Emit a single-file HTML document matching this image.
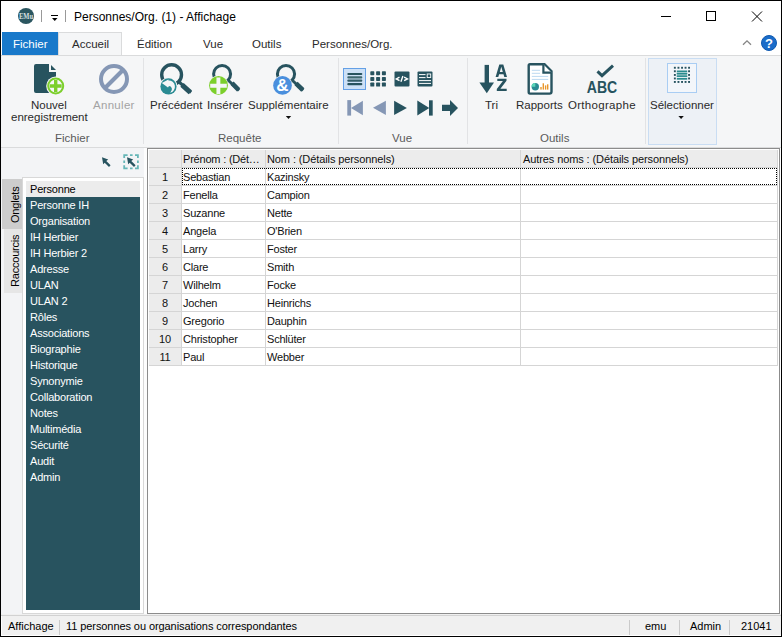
<!DOCTYPE html>
<html><head><meta charset="utf-8">
<style>
*{margin:0;padding:0;box-sizing:border-box}
html,body{width:782px;height:637px;overflow:hidden;background:#fff}
body{position:relative;font-family:"Liberation Sans",sans-serif;color:#222}
.a{position:absolute}
.t{position:absolute;white-space:nowrap;line-height:1}
#frame{left:0;top:0;width:782px;height:637px;border:1px solid #000}
.rb{font-size:11.5px;color:#2a2a2a}
.grp{font-size:11.5px;color:#5a5a5a}
.sep{position:absolute;width:1px;background:#e2e3e5}
.lst{font-size:11px;color:#fff;letter-spacing:-0.2px}
.g{font-size:11px;color:#111;letter-spacing:-0.2px}
.hl{position:absolute;height:1px;background:#d5d5d5}
.vl{position:absolute;width:1px;background:#d5d5d5}
.sb{font-size:11px;color:#000}
</style></head><body>
<!-- title bar -->
<div class="a" style="left:18px;top:8px;width:16px;height:16px;border-radius:50%;background:#2b5660"></div>
<svg class="a" style="left:0;top:0" width="40" height="30"><text x="19" y="18.8" font-family="Liberation Serif" font-weight="bold" font-size="8.5" textLength="14" lengthAdjust="spacingAndGlyphs" fill="#d9e1e2">EMu</text></svg>
<div class="a" style="left:41px;top:10px;width:1px;height:12px;background:#999"></div>
<div class="a" style="left:51px;top:15px;width:7px;height:1px;background:#000"></div>
<svg class="a" style="left:51px;top:17px" width="8" height="5"><path d="M1 1H6.5L3.75 4Z" fill="#000"/></svg>
<div class="a" style="left:65px;top:10px;width:1px;height:12px;background:#999"></div>
<div class="t" style="left:74px;top:11px;font-size:12px;color:#000">Personnes/Org. (1) - Affichage</div>
<div class="a" style="left:661px;top:16px;width:10px;height:1px;background:#000"></div>
<div class="a" style="left:706px;top:11px;width:10px;height:10px;border:1px solid #000"></div>
<svg class="a" style="left:751px;top:11px" width="12" height="12"><path d="M1 0.5L11 10.5M11 0.5L1 10.5" stroke="#000" stroke-width="1"/></svg>

<!-- tabs -->
<div class="a" style="left:2px;top:32px;width:56px;height:23px;background:#1979ca"></div>
<div class="t" style="left:13px;top:39px;font-size:11.5px;color:#fff">Fichier</div>
<div class="a" style="left:58px;top:32px;width:64px;height:24px;background:#f5f6f7;border:1px solid #dadbdc;border-bottom:none"></div>
<div class="t rb" style="left:72px;top:39px">Accueil</div>
<div class="t rb" style="left:137px;top:39px">Édition</div>
<div class="t rb" style="left:203px;top:39px">Vue</div>
<div class="t rb" style="left:252px;top:39px">Outils</div>
<div class="t rb" style="left:312px;top:39px">Personnes/Org.</div>
<svg class="a" style="left:740px;top:38px" width="14" height="10"><path d="M3 6.8L7 2.9L11 6.8" stroke="#858585" fill="none" stroke-width="1.3"/></svg>
<div class="a" style="left:761px;top:35px;width:16px;height:16px;border-radius:50%;background:#1a6cc9;border:1px solid #0e59b0"></div>
<div class="t" style="left:765px;top:37px;font-size:13px;font-weight:bold;color:#fff">?</div>

<!-- ribbon -->
<div class="a" style="left:1px;top:55px;width:780px;height:93px;background:#f5f6f7;border-top:1px solid #dadbdc;border-bottom:1px solid #dadbdc"></div>
<div class="sep" style="left:143px;top:58px;height:86px"></div>
<div class="sep" style="left:338px;top:58px;height:86px"></div>
<div class="sep" style="left:467px;top:58px;height:86px"></div>
<div class="sep" style="left:645px;top:58px;height:86px"></div>

<div class="a" style="left:648px;top:58px;width:69px;height:87px;background:#edf1f6;border:1px solid #c9ddf3"></div>
<div class="a" style="left:667px;top:63px;width:30px;height:30px;background:#f3f6fa;border:1px solid #a9cdf3"></div>
<div class="a" style="left:343px;top:68px;width:23px;height:22px;background:#cce0f6;border:1px solid #64a0e6"></div>

<div class="t rb" style="left:31px;top:100px">Nouvel</div>
<div class="t rb" style="left:11px;top:112px">enregistrement</div>
<div class="t rb" style="left:93px;top:100px;color:#a3a3a3;letter-spacing:0.3px">Annuler</div>
<div class="t grp" style="left:55px;top:133px">Fichier</div>

<div class="t rb" style="left:150px;top:100px">Précédent</div>
<div class="t rb" style="left:207px;top:100px">Insérer</div>
<div class="t rb" style="left:248px;top:100px">Supplémentaire</div>
<div class="t grp" style="left:218px;top:133px">Requête</div>

<div class="t grp" style="left:392px;top:133px">Vue</div>

<div class="t rb" style="left:485px;top:100px">Tri</div>
<div class="t rb" style="left:516px;top:100px">Rapports</div>
<div class="t rb" style="left:568px;top:100px;letter-spacing:0.3px">Orthographe</div>
<div class="t grp" style="left:540px;top:133px">Outils</div>

<div class="t rb" style="left:650px;top:100px">Sélectionner</div>

<!-- ribbon icons -->
<svg class="a" style="left:0;top:0" width="782" height="150" viewBox="0 0 782 150">
 <!-- Nouvel: document -->
 <path d="M36 64H49V72H56V91Q56 93 54 93H36Q34 93 34 91V66Q34 64 36 64Z" fill="#27535f"/>
 <path d="M51 65L56 70H51Z" fill="#27535f"/>
 <circle cx="55.7" cy="86" r="9.5" fill="#f5f6f7"/>
 <circle cx="55.7" cy="86" r="7.5" fill="none" stroke="#7ccf2c" stroke-width="2"/>
 <path d="M49.7 86H61.7M55.7 80V92" stroke="#7ccf2c" stroke-width="3.4"/>
 <!-- Annuler -->
 <circle cx="114" cy="79" r="13" fill="none" stroke="#8597b5" stroke-width="4"/>
 <path d="M123.5 69.5L104.5 88.5" stroke="#8597b5" stroke-width="4"/>
 <!-- Precedent magnifier -->
 <circle cx="171.6" cy="74.7" r="9.9" fill="none" stroke="#27535f" stroke-width="3.4"/>
 <path d="M178.5 81.5L191 92.5" stroke="#27535f" stroke-width="3"/>
 <path d="M182 84.8L190.3 92.3" stroke="#27535f" stroke-width="5"/>
 <circle cx="168.5" cy="86.4" r="8.9" fill="#f5f6f7"/>
 <circle cx="168.5" cy="86.4" r="8.1" fill="#2a8b93"/>
 <path d="M161.8 83.1L168.4 79.5V80.4A6.3 6.3 0 0 1 170.2 92.8Q172.6 90.2 171.8 88.2Q171 86.1 169 86L168 87.6Z" fill="#f5f6f7"/>
 <!-- Inserer magnifier -->
 <circle cx="222.1" cy="74" r="8.5" fill="none" stroke="#27535f" stroke-width="3"/>
 <path d="M228 80L239 90.5" stroke="#27535f" stroke-width="3"/>
 <path d="M232 83.2L238.6 89.8" stroke="#27535f" stroke-width="4.6"/>
 <circle cx="218.5" cy="85.4" r="10" fill="#f5f6f7"/>
 <circle cx="218.5" cy="85.4" r="9.4" fill="#7ccf2c"/>
 <path d="M210.2 85.7H226.8M218.4 77.6V93.9" stroke="#f5f6f7" stroke-width="3.9"/>
 <!-- Supplementaire magnifier -->
 <circle cx="286" cy="74.1" r="8.6" fill="none" stroke="#27535f" stroke-width="3"/>
 <path d="M292 80L303 90.5" stroke="#27535f" stroke-width="3"/>
 <path d="M296 83.3L302.8 90" stroke="#27535f" stroke-width="4.6"/>
 <circle cx="282.5" cy="85.4" r="10" fill="#f5f6f7"/>
 <circle cx="282.5" cy="85.4" r="9.35" fill="#4a8fdd"/>
 <text x="282.3" y="90.6" text-anchor="middle" font-family="Liberation Sans" font-weight="bold" font-size="17" fill="#fff">&amp;</text>
 <!-- dropdown arrow under Supplementaire -->
 <path d="M285.8 115.9H291.2L288.5 118.9Z" fill="#111"/>
 <!-- Vue icons -->
 <g fill="#27535f">
  <rect x="347.3" y="72.9" width="15" height="2.2" rx="1"/>
  <rect x="347.3" y="76.2" width="15" height="2.2" rx="1" fill="#3f6871"/>
  <rect x="347.3" y="79.6" width="15" height="2.2" rx="1" fill="#345e68"/>
  <rect x="347.3" y="83" width="15" height="2.2" rx="1"/>
  <rect x="370.3" y="71.3" width="4" height="4" rx="0.7"/>
  <rect x="376.1" y="71.3" width="4" height="4" rx="0.7"/>
  <rect x="381.9" y="71.3" width="4" height="4" rx="0.7"/>
  <rect x="370.3" y="77" width="4" height="4" rx="0.7"/>
  <rect x="376.1" y="77" width="4" height="4" rx="0.7"/>
  <rect x="381.9" y="77" width="4" height="4" rx="0.7"/>
  <rect x="370.3" y="82.6" width="4" height="4" rx="0.7"/>
  <rect x="376.1" y="82.6" width="4" height="4" rx="0.7"/>
  <rect x="381.9" y="82.6" width="4" height="4" rx="0.7"/>
  <rect x="394.5" y="71.4" width="15" height="15" rx="1"/>
  <rect x="417.5" y="71.4" width="15" height="15" rx="1"/>
  <path d="M394 108L362.9 101" fill="none"/>
  <!-- nav -->
  <path d="M394.1 100.7L406.9 107.9L394.1 115.1Z"/>
  <path d="M417.3 100.5L429.3 107.9L417.3 115.5Z"/>
  <rect x="429" y="100.3" width="3.7" height="15.3"/>
  <path d="M442 104.7H450V100.1L458 108L450 115.9V110.9H442Z"/>
 </g>
 <g fill="#8597b5">
  <rect x="347.3" y="100.1" width="3.8" height="15.5"/>
  <path d="M351 107.9L362.9 100.7V115.2Z"/>
  <path d="M373 107.8L385.9 100.7V115.1Z"/>
 </g>
 <path d="M399.5 77.1L396.3 78.9L399.5 80.7M402.9 76.1L400.9 81.7M404.1 77.1L407.5 78.9L404.1 80.7" fill="none" stroke="#fff" stroke-width="1.4"/>
 <g stroke="#fff" stroke-width="1">
  <path d="M419 74.6H425.5M419 77.6H425.5M419 80.6H431M419 83.4H431"/>
  <rect x="427.2" y="74" width="3.5" height="3.5" fill="none" stroke-width="0.9"/>
 </g>
 <!-- Tri -->
 <g fill="#27535f">
  <rect x="484.6" y="64.9" width="4.4" height="18.5"/>
  <path d="M479.4 82.6H494L486.8 93.2Z"/>
  <path d="M499.3 64.4H503.3L507 76.9H504.3L503.5 74.2H499.1L498.3 76.9H495.6ZM499.8 71.9H502.8L501.3 66.8Z"/>
  <path d="M497.3 78.8H506.5V80.8L500.4 88.8H506.7V90.9H496.8V88.9L502.9 80.9H497.3Z"/>
 </g>
 <!-- Rapports -->
 <path d="M530 64.3H544.5L551.5 71.3V91.5Q551.5 93.6 549.5 93.6H530Q528.7 93.6 528.7 92V65.6Q528.7 64.3 530 64.3Z" fill="#fff" stroke="#27535f" stroke-width="2.4"/>
 <path d="M543.4 64.5V72.6H551.5" fill="#fff" stroke="#27535f" stroke-width="2.2"/>
 <g stroke="#bcd9f1" stroke-width="1">
  <path d="M531.8 70.3H540M531.8 73.3H540M531.8 76.4H548.2M531.8 79.4H548.2"/>
 </g>
 <circle cx="535.3" cy="86.8" r="3.7" fill="#2a8b93"/>
 <path d="M535.3 86.8V83.1A3.7 3.7 0 0 0 531.6 86.8Z" fill="#5ad6b8"/>
 <g fill="#e8962b">
  <rect x="540.3" y="87" width="1.4" height="2.6"/>
  <rect x="542.6" y="83.3" width="1.4" height="6.3"/>
  <rect x="544.9" y="85.4" width="1.4" height="4.2"/>
  <rect x="547" y="84.3" width="1.4" height="5.3"/>
 </g>
 <!-- Orthographe -->
 <path d="M597.5 71.4L602 75.6L613 65.7" fill="none" stroke="#27535f" stroke-width="3"/>
 <text x="602" y="92.9" text-anchor="middle" font-family="Liberation Sans" font-weight="bold" font-size="15.8" textLength="30.5" lengthAdjust="spacingAndGlyphs" fill="#27535f">ABC</text>
 <!-- Selectionner -->
 <g fill="#27535f"><rect x="673.9" y="66.8" width="1.9" height="1.9"/><rect x="677.5" y="66.8" width="1.9" height="1.9"/><rect x="681.1" y="66.8" width="1.9" height="1.9"/><rect x="684.6" y="66.8" width="1.9" height="1.9"/><rect x="688.1" y="66.8" width="1.9" height="1.9"/><rect x="673.9" y="70.3" width="1.9" height="1.9"/><rect x="688.1" y="70.3" width="1.9" height="1.9"/><rect x="673.9" y="74.0" width="1.9" height="1.9"/><rect x="688.1" y="74.0" width="1.9" height="1.9"/><rect x="673.9" y="77.5" width="1.9" height="1.9"/><rect x="688.1" y="77.5" width="1.9" height="1.9"/><rect x="673.9" y="81.0" width="1.9" height="1.9"/><rect x="677.5" y="81.0" width="1.9" height="1.9"/><rect x="681.1" y="81.0" width="1.9" height="1.9"/><rect x="684.6" y="81.0" width="1.9" height="1.9"/><rect x="688.1" y="81.0" width="1.9" height="1.9"/></g>
 <rect x="676.8" y="70.5" width="10.4" height="1.8" fill="#2a8b8f"/>
 <rect x="676.8" y="72.9" width="10.4" height="4" fill="#7fb8b9"/>
 <rect x="676.8" y="72.9" width="10.4" height="1.2" fill="#2a8b8f"/>
 <rect x="676.8" y="75.7" width="10.4" height="1.2" fill="#2a8b8f"/>
 <rect x="676.8" y="77.9" width="10.4" height="1.8" fill="#2a8b8f"/>
 <path d="M678.4 115.9H683.8L681.1 118.9Z" fill="#111"/>
</svg>

<!-- left panel -->
<div class="a" style="left:1px;top:148px;width:143px;height:466px;background:#f3f4f6"></div>
<div class="a" style="left:144px;top:148px;width:3px;height:466px;background:#fdfdfd"></div>
<svg class="a" style="left:0;top:148px" width="146" height="30" viewBox="0 148 146 30">
 <path d="M102 157.2L108.2 159.4L106.3 161.1L110.6 165.3L109 166.9L104.7 162.7L103.2 164.3Z" fill="#27535f"/>
 <path d="M124.2 158V155.1H127.6M135 155.1H137.9V158M137.9 165.3V168.4H135M127.6 168.4H124.2V165.3M130 155.1H132.6M130 168.4H132.6M124.2 160.5V163M137.9 160.5V163" fill="none" stroke="#66b6b7" stroke-width="1.8"/>
 <path d="M127 157.2L133.2 159.4L131.3 161.1L135.6 165.3L134 166.9L129.7 162.7L128.2 164.3Z" fill="#27535f"/>
</svg>
<div class="a" style="left:2px;top:179px;width:20px;height:50px;background:#cdcdcd"></div>
<div class="a" style="left:4px;top:229px;width:18px;height:64px;background:#e6e6e6"></div>
<div class="t" style="left:10px;top:223px;font-size:11px;color:#000;letter-spacing:-0.2px;transform:rotate(-90deg);transform-origin:0 0">Onglets</div>
<div class="t" style="left:10px;top:287px;font-size:11px;color:#000;letter-spacing:-0.2px;transform:rotate(-90deg);transform-origin:0 0">Raccourcis</div>
<div class="a" style="left:22px;top:177px;width:122px;height:437px;background:#fff;border:1px solid #d8d8d8"></div>
<div class="a" style="left:26px;top:181px;width:114px;height:16px;background:#ececec"></div>
<div class="a" style="left:26px;top:197px;width:114px;height:413px;background:#28535f"></div>
<div class="t" style="left:30px;top:184px;font-size:11px;color:#000;letter-spacing:-0.2px">Personne</div>
<div class="t lst" style="left:30px;top:200px">Personne IH</div>
<div class="t lst" style="left:30px;top:216px">Organisation</div>
<div class="t lst" style="left:30px;top:232px">IH Herbier</div>
<div class="t lst" style="left:30px;top:248px">IH Herbier 2</div>
<div class="t lst" style="left:30px;top:264px">Adresse</div>
<div class="t lst" style="left:30px;top:280px">ULAN</div>
<div class="t lst" style="left:30px;top:296px">ULAN 2</div>
<div class="t lst" style="left:30px;top:312px">Rôles</div>
<div class="t lst" style="left:30px;top:328px">Associations</div>
<div class="t lst" style="left:30px;top:344px">Biographie</div>
<div class="t lst" style="left:30px;top:360px">Historique</div>
<div class="t lst" style="left:30px;top:376px">Synonymie</div>
<div class="t lst" style="left:30px;top:392px">Collaboration</div>
<div class="t lst" style="left:30px;top:408px">Notes</div>
<div class="t lst" style="left:30px;top:424px">Multimédia</div>
<div class="t lst" style="left:30px;top:440px">Sécurité</div>
<div class="t lst" style="left:30px;top:456px">Audit</div>
<div class="t lst" style="left:30px;top:472px">Admin</div>

<!-- grid -->
<div class="a" style="left:147px;top:148px;width:633px;height:466px;background:#fff;border:1px solid #8c8c8c"></div>
<div class="a" style="left:149px;top:150px;width:628px;height:17px;background:#ececec"></div>
<div class="a" style="left:149px;top:167px;width:32px;height:198px;background:#ececec"></div>
<div class="hl" style="left:149px;top:167px;width:629px"></div>
<div class="hl" style="left:149px;top:185px;width:629px"></div>
<div class="hl" style="left:149px;top:203px;width:629px"></div>
<div class="hl" style="left:149px;top:221px;width:629px"></div>
<div class="hl" style="left:149px;top:239px;width:629px"></div>
<div class="hl" style="left:149px;top:257px;width:629px"></div>
<div class="hl" style="left:149px;top:275px;width:629px"></div>
<div class="hl" style="left:149px;top:293px;width:629px"></div>
<div class="hl" style="left:149px;top:311px;width:629px"></div>
<div class="hl" style="left:149px;top:329px;width:629px"></div>
<div class="hl" style="left:149px;top:347px;width:629px"></div>
<div class="hl" style="left:149px;top:365px;width:629px"></div>
<div class="vl" style="left:181px;top:150px;height:215px"></div>
<div class="vl" style="left:265px;top:150px;height:215px"></div>
<div class="vl" style="left:520px;top:150px;height:215px"></div>
<div class="vl" style="left:777px;top:150px;height:215px"></div>
<div class="t g" style="left:183px;top:154px">Prénom : (Dét…</div>
<div class="t g" style="left:267px;top:154px;letter-spacing:-0.1px">Nom : (Détails personnels)</div>
<div class="t g" style="left:523px;top:154px;letter-spacing:-0.1px">Autres noms : (Détails personnels)</div>
<div class="t g" style="left:149px;width:32px;text-align:center;top:172px">1</div>
<div class="t g" style="left:183px;top:172px">Sebastian</div>
<div class="t g" style="left:267px;top:172px">Kazinsky</div>
<div class="t g" style="left:149px;width:32px;text-align:center;top:190px">2</div>
<div class="t g" style="left:183px;top:190px">Fenella</div>
<div class="t g" style="left:267px;top:190px">Campion</div>
<div class="t g" style="left:149px;width:32px;text-align:center;top:208px">3</div>
<div class="t g" style="left:183px;top:208px">Suzanne</div>
<div class="t g" style="left:267px;top:208px">Nette</div>
<div class="t g" style="left:149px;width:32px;text-align:center;top:226px">4</div>
<div class="t g" style="left:183px;top:226px">Angela</div>
<div class="t g" style="left:267px;top:226px">O'Brien</div>
<div class="t g" style="left:149px;width:32px;text-align:center;top:244px">5</div>
<div class="t g" style="left:183px;top:244px">Larry</div>
<div class="t g" style="left:267px;top:244px">Foster</div>
<div class="t g" style="left:149px;width:32px;text-align:center;top:262px">6</div>
<div class="t g" style="left:183px;top:262px">Clare</div>
<div class="t g" style="left:267px;top:262px">Smith</div>
<div class="t g" style="left:149px;width:32px;text-align:center;top:280px">7</div>
<div class="t g" style="left:183px;top:280px">Wilhelm</div>
<div class="t g" style="left:267px;top:280px">Focke</div>
<div class="t g" style="left:149px;width:32px;text-align:center;top:298px">8</div>
<div class="t g" style="left:183px;top:298px">Jochen</div>
<div class="t g" style="left:267px;top:298px">Heinrichs</div>
<div class="t g" style="left:149px;width:32px;text-align:center;top:316px">9</div>
<div class="t g" style="left:183px;top:316px">Gregorio</div>
<div class="t g" style="left:267px;top:316px">Dauphin</div>
<div class="t g" style="left:149px;width:32px;text-align:center;top:334px">10</div>
<div class="t g" style="left:183px;top:334px">Christopher</div>
<div class="t g" style="left:267px;top:334px">Schlüter</div>
<div class="t g" style="left:149px;width:32px;text-align:center;top:352px">11</div>
<div class="t g" style="left:183px;top:352px">Paul</div>
<div class="t g" style="left:267px;top:352px">Webber</div>
<div class="a" style="left:182px;top:168px;width:595px;height:17px;border:1px dotted #000"></div>

<!-- status bar -->
<div class="a" style="left:1px;top:614px;width:780px;height:1px;background:#f0f0f0"></div>
<div class="a" style="left:1px;top:615px;width:780px;height:1px;background:#d2d2d2"></div>
<div class="a" style="left:1px;top:616px;width:780px;height:20px;background:#f0f0f0;border-left:1px solid #fff;border-bottom:1px solid #fff"></div>
<div class="t sb" style="left:8px;top:621px">Affichage</div>
<div class="a" style="left:59px;top:620px;width:1px;height:15px;background:#cacaca"></div>
<div class="t sb" style="left:66px;top:621px;letter-spacing:-0.08px">11 personnes ou organisations correspondantes</div>
<div class="a" style="left:629px;top:620px;width:1px;height:15px;background:#cacaca"></div>
<div class="t sb" style="left:645px;top:621px">emu</div>
<div class="a" style="left:679px;top:620px;width:1px;height:15px;background:#cacaca"></div>
<div class="t sb" style="left:690px;top:621px">Admin</div>
<div class="a" style="left:729px;top:620px;width:1px;height:15px;background:#cacaca"></div>
<div class="t sb" style="left:741px;top:621px">21041</div>

<div class="a" id="frame"></div>
</body></html>
